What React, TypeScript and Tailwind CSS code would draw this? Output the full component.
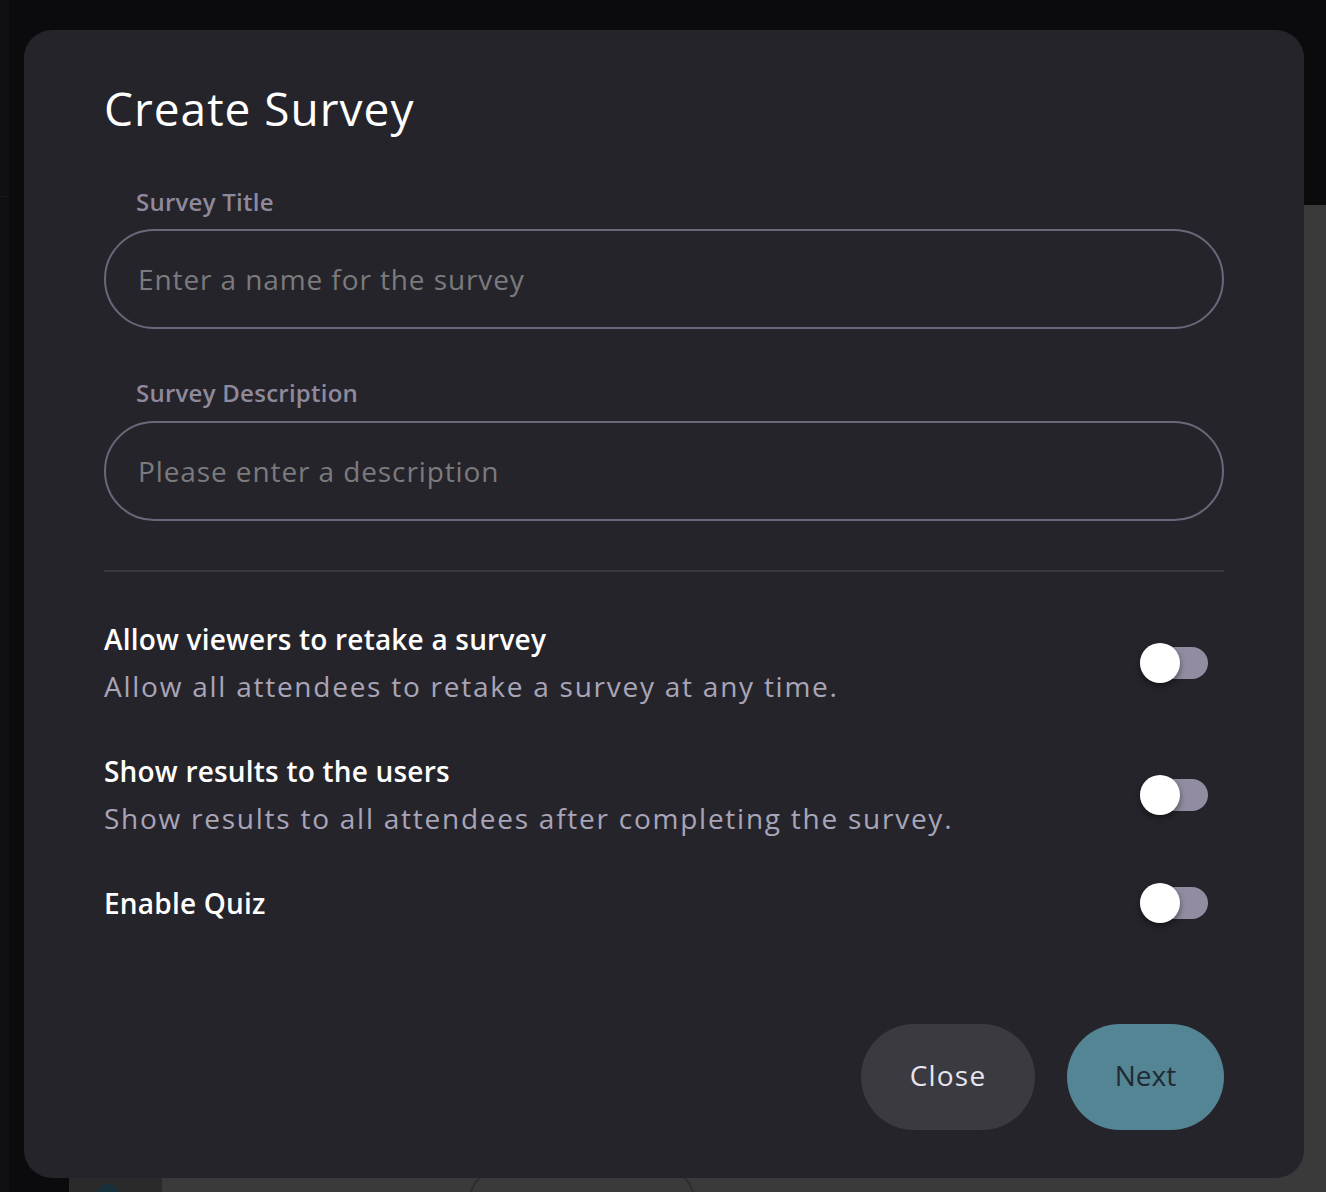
import React, { useState } from 'react';

const font = { fontFamily: '"Open Sans", "Noto Sans", sans-serif' };

const Toggle = ({ on, onChange }: { on: boolean; onChange: () => void }) => (
  <button
    onClick={onChange}
    className="relative w-[68px] h-[40px] flex items-center shrink-0"
    aria-pressed={on}
  >
    <span className={`block w-[68px] h-[32px] rounded-full ${on ? 'bg-[#548595]' : 'bg-[#918c9f]'}`} />
    <span
      className={`absolute top-0 w-[40px] h-[40px] rounded-full bg-white shadow-[0_3px_6px_rgba(0,0,0,0.45)] ${on ? 'left-[28px]' : 'left-0'}`}
    />
  </button>
);

const SettingRow = ({
  title,
  desc,
  on,
  onChange,
}: {
  title: string;
  desc?: string;
  on: boolean;
  onChange: () => void;
}) => (
  <div className="flex items-center justify-between pr-[16px]">
    <div className="flex flex-col">
      <div className="text-[28px] leading-[40px] font-semibold text-white tracking-[0.2px]">{title}</div>
      {desc && (
        <div className="text-[28px] leading-[40px] mt-[7px] text-[#a9a5b8] tracking-[1.75px]">{desc}</div>
      )}
    </div>
    <Toggle on={on} onChange={onChange} />
  </div>
);

const App = () => {
  const [retake, setRetake] = useState(false);
  const [results, setResults] = useState(false);
  const [quiz, setQuiz] = useState(false);

  return (
    <div className="relative w-full h-[1192px] overflow-hidden bg-[#0b0b0d] flex" style={font}>
      {/* page behind the modal */}
      <div className="w-[9px] flex flex-col bg-[#101012]">
        <div className="h-[197px] border-b border-[#18181b]" />
      </div>
      <div className="w-[60px] bg-[#0b0b0d]" />
      <div className="flex-1 flex flex-col">
        <div className="h-[205px] bg-[#0b0b0d]" />
        <div className="flex-1 flex">
          <div className="w-[93px] bg-[#2a2a2a] flex flex-col justify-end items-center">
            <div className="w-[24px] h-[24px] rounded-full bg-[#17303a] -mb-[16px] mr-[16px]" />
          </div>
          <div className="flex-1 bg-[#3a3a3a] flex flex-col justify-end pl-[306px]">
            <div className="w-[228px] h-[40px] rounded-t-full border-2 border-b-0 border-[#2d2d36] -mb-[12px]" />
          </div>
        </div>
      </div>

      {/* modal */}
      <div className="absolute left-[24px] top-[30px] w-[1280px] h-[1148px] rounded-[28px] bg-[#26242b] px-[80px] pt-[48px] flex flex-col">
        <h1 className="text-[46px] leading-[60px] text-white font-normal tracking-[1px]">Create Survey</h1>

        <label className="mt-[48px] ml-[32px] text-[24px] leading-[32px] font-semibold text-[#8e8a9c] tracking-[0.25px]">Survey Title</label>
        <input
          className="mt-[11px] h-[100px] rounded-full border-2 border-[#6b6679] bg-transparent px-[32px] text-[28px] text-white placeholder:text-[#7b7b7d] outline-none tracking-[0.9px]"
          placeholder="Enter a name for the survey"
          style={font}
        />

        <label className="mt-[48px] ml-[32px] text-[24px] leading-[32px] font-semibold text-[#8e8a9c] tracking-[0.25px]">Survey Description</label>
        <input
          className="mt-[12px] h-[100px] rounded-full border-2 border-[#6b6679] bg-transparent px-[32px] text-[28px] text-white placeholder:text-[#7b7b7d] outline-none tracking-[0.9px]"
          placeholder="Please enter a description"
          style={font}
        />

        <div className="mt-[49px] h-[2px] bg-[#3a3840]" />

        <div className="mt-[47px] flex flex-col gap-[45px]">
          <SettingRow
            title="Allow viewers to retake a survey"
            desc="Allow all attendees to retake a survey at any time."
            on={retake}
            onChange={() => setRetake(!retake)}
          />
          <SettingRow
            title="Show results to the users"
            desc="Show results to all attendees after completing the survey."
            on={results}
            onChange={() => setResults(!results)}
          />
          <SettingRow title="Enable Quiz" on={quiz} onChange={() => setQuiz(!quiz)} />
        </div>

        <div className="mt-auto mb-[48px] flex justify-end gap-[32px]">
          <button className="w-[174px] h-[106px] pb-[4px] rounded-full bg-[#3b3a41] text-[28px] text-[#e6e4ec] tracking-[1.2px]">
            Close
          </button>
          <button className="w-[157px] h-[106px] pb-[4px] rounded-full bg-[#548595] text-[28px] text-[#1f2a33] tracking-[0px]">
            Next
          </button>
        </div>
      </div>
    </div>
  );
};

export default App;
